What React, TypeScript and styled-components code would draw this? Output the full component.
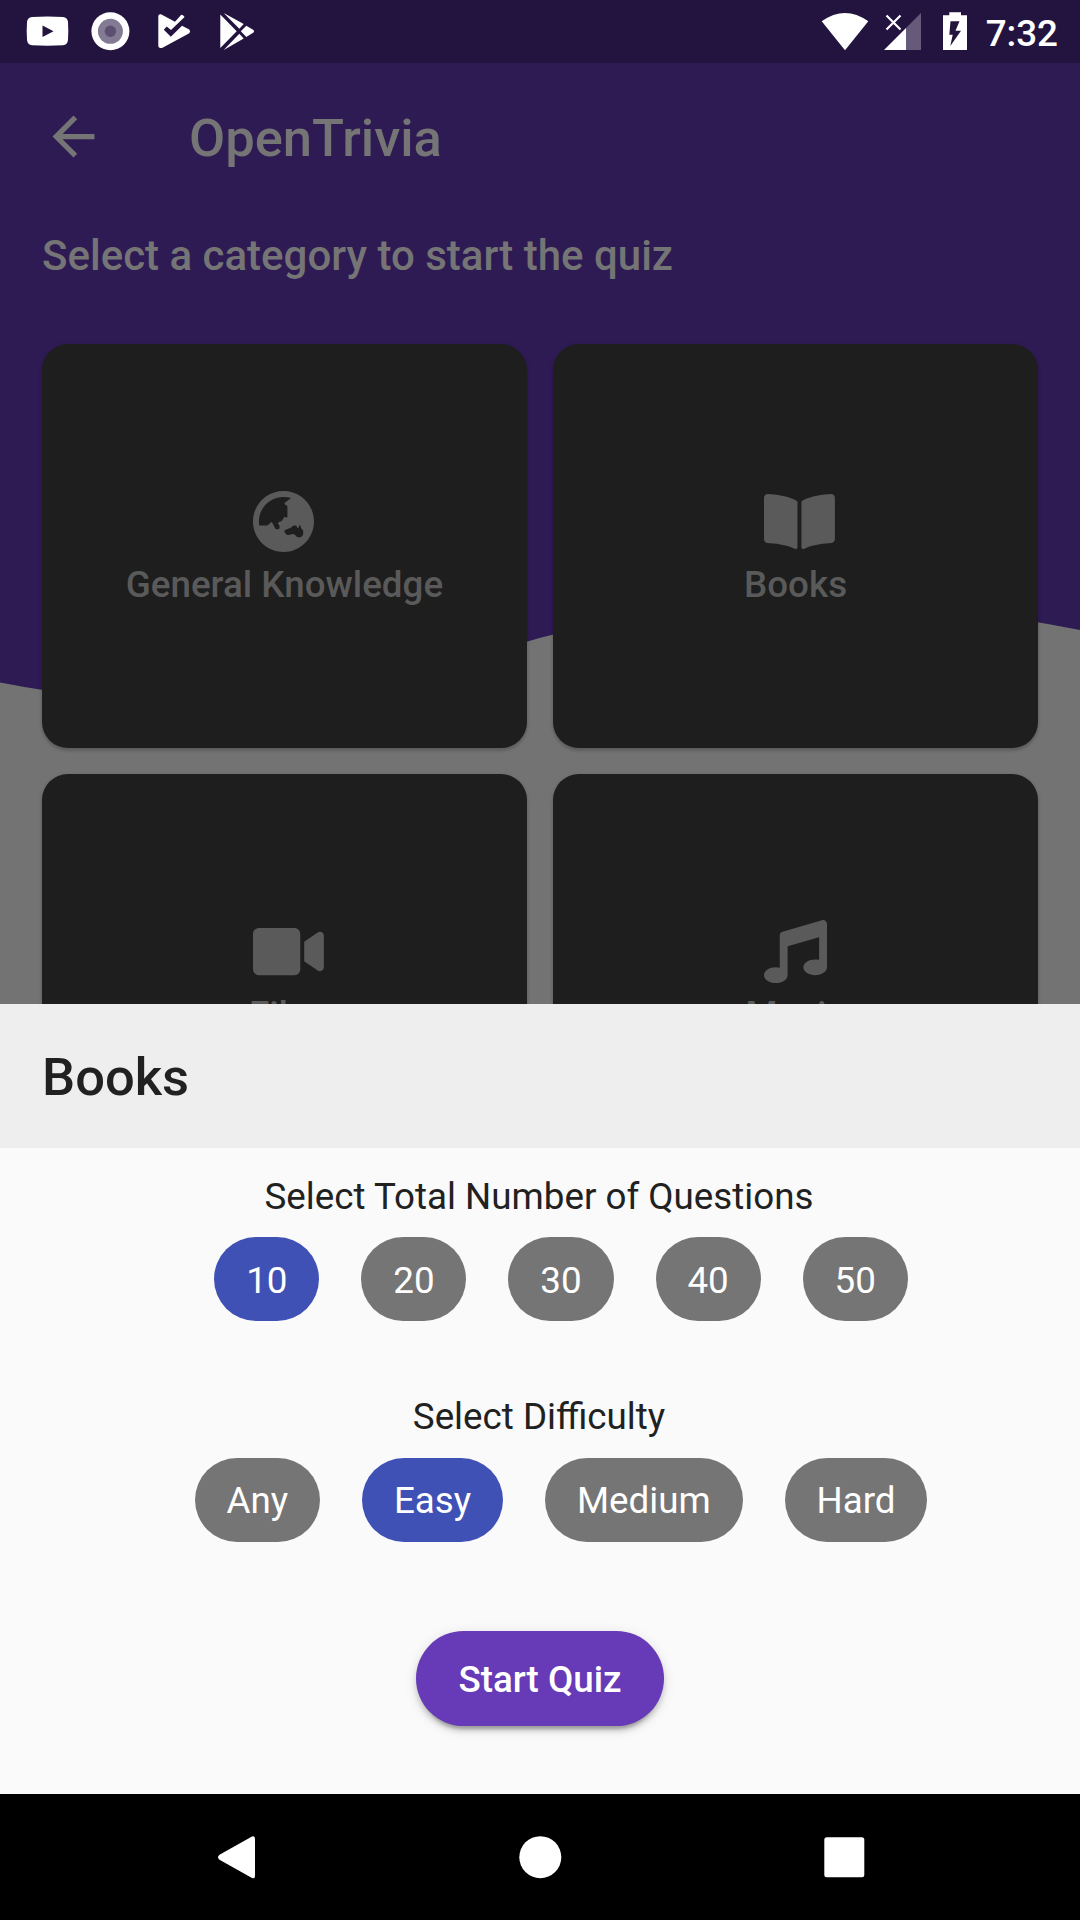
import React from "react";
import styled, { createGlobalStyle } from "styled-components";
import { FaBookOpen, FaGlobeAsia, FaMusic, FaVideo } from "react-icons/fa";

const GlobalStyle = createGlobalStyle`
  *, *::before, *::after { box-sizing: border-box; }
  body { margin: 0; background: #000; }
`;

const Phone = styled.div`
  display: flex;
  flex-direction: column;
  width: 1080px;
  height: 1920px;
  overflow: hidden;
  font-family: Roboto, "Liberation Sans", sans-serif;
`;

const StatusBar = styled.header`
  display: flex;
  justify-content: space-between;
  flex: none;
  height: 63px;
  padding: 0 22px 0 16px;
  background: #23143f;
  color: #fff;
`;

const StatusGroup = styled.div`
  display: flex;
  align-items: center;
`;

const StatusIcon = styled.svg`
  display: block;
  height: 63px;
  fill: currentColor;
`;

const Clock = styled.span`
  margin-left: 16px;
  font-size: 36.75px;
  font-weight: 500;
  line-height: 43px;
  padding-top: 3px;
`;

const Screen = styled.main`
  position: relative;
  flex: none;
  height: 940.6px;
  overflow: hidden;
  background: #737373;
`;

const Wave = styled.svg`
  position: absolute;
  inset: 0;
  width: 1080px;
  height: 672px;
  fill: #2f1b54;
`;

const ScreenContent = styled.div`
  position: relative;
`;

const AppBar = styled.div`
  display: flex;
  align-items: center;
  height: 147px;
  padding-left: 42px;
  color: #757575;
`;

const BackIcon = styled.svg`
  width: 63px;
  height: 63px;
  margin-right: 84px;
  fill: currentColor;
`;

const AppTitle = styled.h1`
  margin: 0;
  padding-top: 2px;
  font-size: 52.5px;
  font-weight: 500;
  line-height: 62px;
`;

const Prompt = styled.p`
  margin: 21px 0 64px;
  padding: 0 42px;
  color: #757575;
  font-size: 42px;
  font-weight: 500;
  line-height: 49px;
`;

const CategoryGrid = styled.div`
  display: grid;
  grid-template-columns: 1fr 1fr;
  gap: 26.25px;
  padding: 0 42px;
`;

const CategoryCard = styled.div`
  display: flex;
  flex-direction: column;
  align-items: center;
  height: 404px;
  padding-top: 146px;
  border-radius: 26px;
  background: #1e1e1e;
  color: #5a5a5a;
  box-shadow: 0 3px 3px rgba(0, 0, 0, 0.14), 0 1px 5px rgba(0, 0, 0, 0.1);
`;

const CategoryIcon = styled.div<{ $glyphWidth: number }>`
  display: flex;
  width: 63px;
  height: 63px;

  svg {
    flex: none;
    width: ${(p) => p.$glyphWidth}px;
    height: 63px;
  }
`;

const CategoryName = styled.span`
  margin-top: 10px;
  font-size: 36.75px;
  font-weight: 500;
  line-height: 43px;
`;

const Sheet = styled.section`
  display: flex;
  flex-direction: column;
  flex: 1;
  background: #fafafa;
  color: #212121;
`;

const SheetHeader = styled.h2`
  display: flex;
  align-items: center;
  height: 144.5px;
  margin: 0 0 26px;
  padding: 3px 0 0 42px;
  background: #eee;
  font-size: 52.5px;
  font-weight: 500;
`;

const Field = styled.div`
  display: flex;
  flex-direction: column;
  align-items: center;
  height: 220.5px;
`;

const FieldLabel = styled.span`
  padding: 0.5px 2px 0 0;
  margin-bottom: 19.5px;
  font-size: 36.75px;
  line-height: 43px;
`;

const ChipRow = styled.div`
  display: flex;
  gap: 42px;
  padding-left: 42px;
`;

const Chip = styled.button<{ $selected?: boolean }>`
  height: 84px;
  padding: 2px 31.9px 0;
  border: 0;
  border-radius: 42px;
  background: ${(p) => (p.$selected ? "#3f51b5" : "#757575")};
  color: #fff;
  font: 400 36.75px Roboto, "Liberation Sans", sans-serif;
`;

const StartButton = styled.button`
  align-self: center;
  height: 94.5px;
  margin-top: 16px;
  padding: 2px 42px 0;
  border: 0;
  border-radius: 48px;
  background: #673ab7;
  color: #fff;
  font: 500 36.75px Roboto, "Liberation Sans", sans-serif;
  box-shadow: 0 8px 3px -5px rgba(0, 0, 0, 0.2), 0 5px 5px rgba(0, 0, 0, 0.14),
    0 3px 13px rgba(0, 0, 0, 0.12);
`;

const NavBar = styled.nav`
  display: flex;
  align-items: center;
  justify-content: space-around;
  flex: none;
  height: 126px;
  padding: 0 84px;
  background: #000;
`;

const NavIcon = styled.svg`
  width: 63px;
  height: 63px;
  fill: #fff;
`;

const categories = [
  { name: "General Knowledge", Icon: FaGlobeAsia, glyphWidth: 61 },
  { name: "Books", Icon: FaBookOpen, glyphWidth: 70.9 },
  { name: "Film", Icon: FaVideo, glyphWidth: 70.9 },
  { name: "Music", Icon: FaMusic, glyphWidth: 63 },
];

const counts = ["10", "20", "30", "40", "50"];
const difficulties = ["Any", "Easy", "Medium", "Hard"];

export default function App() {
  const [count, setCount] = React.useState("10");
  const [difficulty, setDifficulty] = React.useState("Easy");

  return (
    <Phone>
      <GlobalStyle />
      <StatusBar>
        <StatusGroup>
          <StatusIcon width="63" viewBox="0 0 63 63">
            <path
              fillRule="evenodd"
              d="M16 17Q31.500 16 47 17Q51.500 17.500 52 22Q52.600 31 52 40Q51.500 44.800 47 45.300Q31.500 46.200 16 45.300Q11.500 44.800 11 40Q10.400 31 11 22Q11.500 17.500 16 17ZM26.500 25.500V37L37.500 31.200Z"
            />
          </StatusIcon>
          <StatusIcon width="63" viewBox="0 0 63 63">
            <circle cx="31.400" cy="31.300" r="19" />
            <circle cx="31.400" cy="31.300" r="12.500" fill="#837a94" />
            <circle cx="31.400" cy="31.300" r="5.700" fill="#5c4f70" />
          </StatusIcon>
          <StatusIcon width="63" viewBox="0 0 63 63">
            <path d="M16.300 16Q16.500 13.800 19 14.200L33 21.700L39 15Q40.500 14.300 42.600 17L29 30L24.700 26.500L21.800 29.700L28.800 36.700L40 25.800L47.300 29.500Q49 31.500 47.300 33.200L20.500 47.700Q16.500 48.800 16.300 46Z" />
          </StatusIcon>
          <StatusIcon width="63" viewBox="0 0 63 63">
            <path d="M15.300 14.500L31.700 31.200L15.300 48ZM18.700 13L38.700 24L34.300 28.700ZM41.300 25.700L48.500 30Q49.700 31.300 48.500 32.500L41.300 37L35.800 31.200ZM34.300 33.800L38.700 38.500L18.700 50Z" />
          </StatusIcon>
        </StatusGroup>
        <StatusGroup>
          <StatusIcon width="64" viewBox="818 0 64 63">
            <path d="M821.700 21.300Q845 4.700 868.300 21.300L845 50.200Z" />
          </StatusIcon>
          <StatusIcon width="58" viewBox="882 0 58 63">
            <path d="M906 28L921 13V50H906Z" opacity="0.3" />
            <path d="M884 50L906 28V50Z" />
            <path
              d="M886.500 15.500L900.500 29.500M900.500 15.500L886.500 29.500"
              fill="none"
              stroke="#fff"
              strokeWidth="2.200"
            />
          </StatusIcon>
          <StatusIcon width="30" viewBox="940 0 30 63">
            <path
              fillRule="evenodd"
              d="M949.300 12.300H961V15.300H967V50H943V15.300H949.300ZM950.500 21.300L949.300 34.700H952.700L950.300 46L961 30.700H955.500L959.500 21.300Z"
            />
          </StatusIcon>
          <Clock>7:32</Clock>
        </StatusGroup>
      </StatusBar>

      <Screen>
        <Wave viewBox="0 63 1080 672">
          <path d="M0 63V682.500Q270 735 480 656.250Q747.700 564.400 1080 630V63Z" />
        </Wave>
        <ScreenContent>
          <AppBar>
            <BackIcon viewBox="0 0 24 24">
              <path d="M20 11H7.830l5.590-5.590L12 4l-8 8 8 8 1.410-1.410L7.830 13H20v-2z" />
            </BackIcon>
            <AppTitle>OpenTrivia</AppTitle>
          </AppBar>
          <Prompt>Select a category to start the quiz</Prompt>
          <CategoryGrid>
            {categories.map(({ name, Icon, glyphWidth }) => (
              <CategoryCard key={name}>
                <CategoryIcon $glyphWidth={glyphWidth}>
                  <Icon />
                </CategoryIcon>
                <CategoryName>{name}</CategoryName>
              </CategoryCard>
            ))}
          </CategoryGrid>
        </ScreenContent>
      </Screen>

      <Sheet>
        <SheetHeader>Books</SheetHeader>
        <Field>
          <FieldLabel>Select Total Number of Questions</FieldLabel>
          <ChipRow>
            {counts.map((value) => (
              <Chip key={value} $selected={value === count} onClick={() => setCount(value)}>
                {value}
              </Chip>
            ))}
          </ChipRow>
        </Field>
        <Field>
          <FieldLabel>Select Difficulty</FieldLabel>
          <ChipRow>
            {difficulties.map((value) => (
              <Chip
                key={value}
                $selected={value === difficulty}
                onClick={() => setDifficulty(value)}
              >
                {value}
              </Chip>
            ))}
          </ChipRow>
        </Field>
        <StartButton>Start Quiz</StartButton>
      </Sheet>

      <NavBar>
        <NavIcon viewBox="0 0 63 63">
          <path d="M47 10.500Q50 9.300 50 12.700V49.700Q50 53.100 47 51.900L14.500 33.700Q11.500 31.200 14.500 28.700Z" />
        </NavIcon>
        <NavIcon viewBox="0 0 63 63">
          <circle cx="31.300" cy="31.200" r="21" />
        </NavIcon>
        <NavIcon viewBox="0 0 63 63">
          <rect x="11.300" y="11.200" width="40" height="40" rx="2.500" />
        </NavIcon>
      </NavBar>
    </Phone>
  );
}
